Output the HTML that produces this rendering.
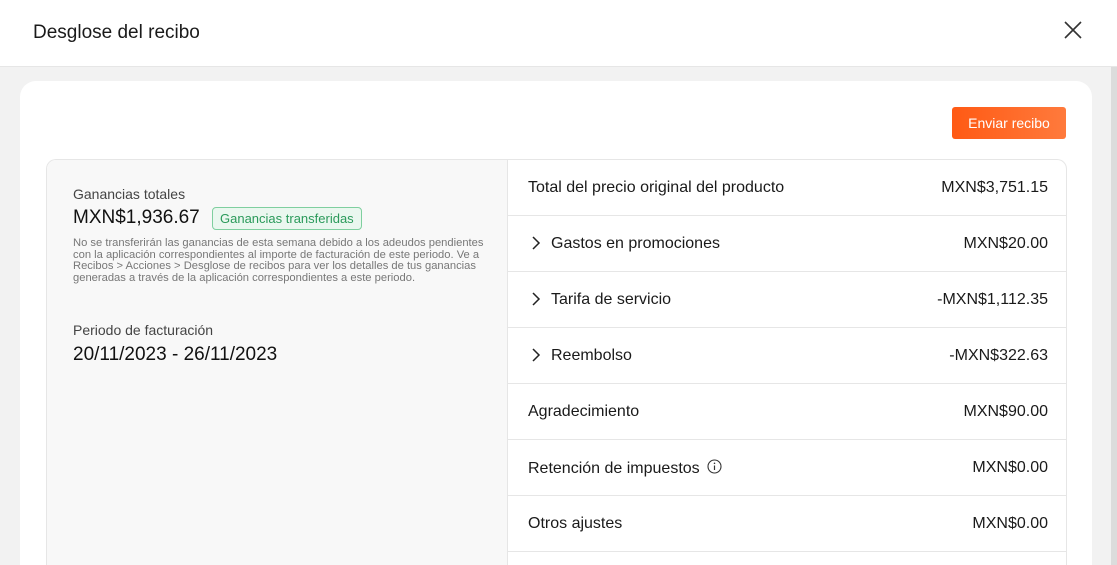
<!DOCTYPE html>
<html><head><meta charset="utf-8"><style>
*{margin:0;padding:0;box-sizing:border-box}
html,body{width:1117px;height:565px;overflow:hidden}
body{background:#f2f2f2;font-family:"Liberation Sans",sans-serif;color:#1a1a1a;position:relative}
.hdr{position:absolute;left:0;top:0;width:1117px;height:67px;background:#fff;border-bottom:1px solid #e6e6e6}
.hdr h1{position:absolute;left:33px;top:22px;font-size:19px;font-weight:normal;color:#1a1a1a}
.close{position:absolute;left:1063px;top:20px}
.sb{position:absolute;left:1111px;top:67px;width:6px;height:498px;background:#dcdcdc}
.card{position:absolute;left:20px;top:81px;width:1072px;height:484px;background:#fff;border-radius:16px 16px 0 0}
.btn{position:absolute;left:952px;top:107px;width:114px;height:32px;border-radius:3px;background:linear-gradient(90deg,#ff5a14,#ff7a3c);color:#fff;font-size:14px;text-align:center;line-height:32px}
.tbl{position:absolute;left:46px;top:159px;width:1021px;height:406px;border:1px solid #e6e6e6;border-bottom:none;border-radius:10px 10px 0 0;overflow:hidden;background:#fff}
.left{position:absolute;left:0;top:0;width:461px;height:100%;background:#f8f8f8;border-right:1px solid #e6e6e6}
.l1{position:absolute;left:26px;top:26px;font-size:14px;color:#444}
.amt{position:absolute;left:26px;top:47px;font-size:19px;color:#111}
.tag{position:absolute;left:165px;top:47px;height:23px;padding:0 7px;border:1px solid #7fcf9f;border-radius:4px;background:#eaf7ef;color:#2a9a5a;font-size:13px;line-height:21px}
.note{position:absolute;left:26px;top:78px;width:412px;font-size:11.2px;line-height:11.6px;color:#777;word-break:break-all}
.l2{position:absolute;left:26px;top:162px;font-size:14px;color:#444}
.date{position:absolute;left:26px;top:184px;font-size:19px;color:#111}
.row{position:absolute;left:461px;width:560px;height:56px;border-bottom:1px solid #e6e6e6;font-size:16px}
.row .t{position:absolute;left:20px;top:19px}
.row .v{position:absolute;right:20px;top:19px}
.row .t.c{left:43px}
.chev{position:absolute;left:23px;top:20px}
</style></head><body>
<div class="hdr"><h1>Desglose del recibo</h1>
<svg class="close" width="20" height="20" viewBox="0 0 20 20"><path d="M2 2L18 18M18 2L2 18" stroke="#333" stroke-width="1.6" fill="none"/></svg></div>
<div class="sb"></div>
<div class="card"></div>
<div class="btn">Enviar recibo</div>
<div class="tbl">
<div class="left">
<div class="l1">Ganancias totales</div>
<div class="amt">MXN$1,936.67</div>
<div class="tag">Ganancias transferidas</div>
<div class="note">No se transferirán las ganancias de esta semana debido a los adeudos pendientes con la aplicación correspondientes al importe de facturación de este periodo. Ve a Recibos &gt; Acciones &gt; Desglose de recibos para ver los detalles de tus ganancias generadas a través de la aplicación correspondientes a este periodo.</div>
<div class="l2">Periodo de facturación</div>
<div class="date">20/11/2023 - 26/11/2023</div>
</div>
<div class="row" style="top:0"><span class="t">Total del precio original del producto</span><span class="v">MXN$3,751.15</span></div>
<div class="row" style="top:56px"><svg class="chev" width="10" height="14" viewBox="0 0 10 14"><path d="M2 1L8 7L2 13" stroke="#222" stroke-width="1.5" fill="none"/></svg><span class="t c">Gastos en promociones</span><span class="v">MXN$20.00</span></div>
<div class="row" style="top:112px"><svg class="chev" width="10" height="14" viewBox="0 0 10 14"><path d="M2 1L8 7L2 13" stroke="#222" stroke-width="1.5" fill="none"/></svg><span class="t c">Tarifa de servicio</span><span class="v">-MXN$1,112.35</span></div>
<div class="row" style="top:168px"><svg class="chev" width="10" height="14" viewBox="0 0 10 14"><path d="M2 1L8 7L2 13" stroke="#222" stroke-width="1.5" fill="none"/></svg><span class="t c">Reembolso</span><span class="v">-MXN$322.63</span></div>
<div class="row" style="top:224px"><span class="t">Agradecimiento</span><span class="v">MXN$90.00</span></div>
<div class="row" style="top:280px"><span class="t">Retención de impuestos <svg width="15" height="15" viewBox="0 0 15 15" style="vertical-align:-1px;margin-left:3px"><circle cx="7.5" cy="7.5" r="6.5" stroke="#333" stroke-width="1.1" fill="none"/><path d="M7.5 6.5V11" stroke="#333" stroke-width="1.2"/><circle cx="7.5" cy="4.3" r="0.8" fill="#333"/></svg></span><span class="v">MXN$0.00</span></div>
<div class="row" style="top:336px"><span class="t">Otros ajustes</span><span class="v">MXN$0.00</span></div>
</div>
</body></html>
